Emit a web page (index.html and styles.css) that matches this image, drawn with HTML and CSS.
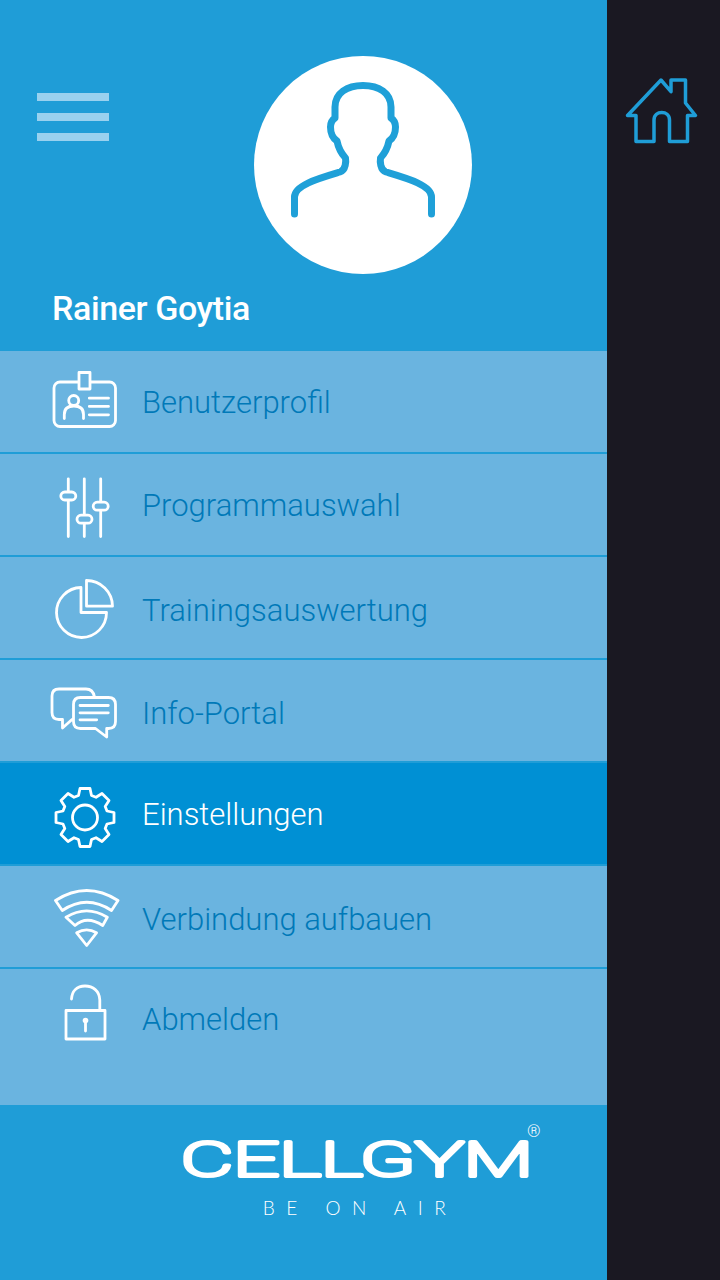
FILE: index.html
```html
<!DOCTYPE html>
<html lang="de">
<head>
<meta charset="utf-8">
<title>Cellgym</title>
<link rel="stylesheet" href="styles.css">
</head>
<body>
<div class="app">
  <aside class="drawer">
    <header class="head">
      <div class="head-top">
        <div class="burger"><span></span><span></span><span></span></div>
        <div class="avatar">
          <svg class="avatar-svg" viewBox="254 56 218 218"><path d="M294.500 214V197C294.500 185 320 178 340 172C346 170 346 161 345.500 158C340 152 338 146 337 141C332.500 138 330.500 132 330.500 127C330.500 123 332 120 335 118V107C335 93 347 85.500 363 85.500C379 85.500 391 93 391 107V118C394 120 395.500 123 395.500 127C395.500 132 393.500 138 389 141C388 146 386 152 380.500 158C380 161 380 170 386 172C406 178 431.500 185 431.500 197V214"/></svg>
        </div>
      </div>
      <div class="name">Rainer Goytia</div>
    </header>
    <nav class="menu">
      <a class="item">
        <svg class="ico" viewBox="50 365.500 72 72"><rect x="54" y="381.500" width="61.500" height="44.500" rx="6"/><rect class="solid" x="79" y="372" width="11" height="16.500"/><circle cx="73.700" cy="400" r="5"/><path d="M64.300 418V414C64.300 408 68 405.500 73.900 405.500S83.500 408 83.500 414V418M89.300 397.700H108.500M89.300 405.900H108.500M89.300 414.300H108.500"/></svg>
        <span class="label label-mid">Benutzerprofil</span>
      </a>
      <a class="item">
        <svg class="ico" viewBox="50 468.500 72 72"><path d="M68.300 478.300V536M84.300 478.300V536M100.700 478.300V536"/><rect class="solid" x="60.800" y="491.500" width="15" height="8" rx="4"/><rect class="solid" x="77" y="514.700" width="15" height="8" rx="4"/><rect class="solid" x="93.200" y="501.700" width="15" height="8" rx="4"/></svg>
        <span class="label label-mid">Programmauswahl</span>
      </a>
      <a class="item">
        <svg class="ico" viewBox="50 571.500 72 72"><path d="M81 587A25 25 0 1 0 106.500 612H81ZM86.500 580A26 26 0 0 1 112.500 605.700H86.500Z"/></svg>
        <span class="label label-low">Trainingsauswertung</span>
      </a>
      <a class="item">
        <svg class="ico" viewBox="50 674.500 72 72"><path d="M94.500 696.500C93.500 691 91 688.500 86 688.500H59C54.500 688.500 52 691 52 695.500V712C52 716.500 54.500 719 59 719H62.500V727.500L72 719"/><path d="M80.500 697H108.500C113 697 115.500 699.500 115.500 704V721C115.500 725.500 113 728 108.500 728H106.700V736.500L95.500 728H80.500C76 728 73.500 725.500 73.500 721V704C73.500 699.500 76 697 80.500 697ZM80 705H108.300M80 712.300H108.300M80 719.300H96.700"/></svg>
        <span class="label label-low">Info-Portal</span>
      </a>
      <a class="item active">
        <svg class="ico" viewBox="50 777.500 72 72"><g transform="translate(85 817)"><path d="M-6.500-22L-5-29H5L6.500-22L11-20.200L17-24L24-17L20.200-11L22-6.500L29-5V5L22 6.500L20.200 11L24 17L17 24L11 20.200L6.500 22L5 29H-5L-6.500 22L-11 20.200L-17 24L-24 17L-20.200 11L-22 6.500L-29 5V-5L-22-6.500L-20.200-11L-24-17L-17-24L-11-20.200Z"/><circle r="12.500"/></g></svg>
        <span class="label label-mid">Einstellungen</span>
      </a>
      <a class="item">
        <svg class="ico" viewBox="50 880.500 72 72"><path d="M55.500 900Q86.700 880 118 900L111.500 910Q86.700 893.500 62.300 910ZM66 916.700Q86.700 904 107.300 916.700L102.700 925Q86.700 914.500 75 925ZM76.700 932.300Q86.700 926.500 96.500 932.300L86.700 945Z"/></svg>
        <span class="label label-low">Verbindung aufbauen</span>
      </a>
      <a class="item last">
        <svg class="ico" viewBox="50 983 72 72"><rect x="66" y="1010.500" width="39" height="28.500"/><path d="M71.500 999C72 991 77 986 85 986S99.500 991 99.800 1000V1010.500M85.500 1021V1031"/><circle class="dot" cx="85.500" cy="1020.500" r="2.800"/></svg>
        <span class="label label-mid">Abmelden</span>
      </a>
    </nav>
    <footer class="foot">
      <div class="logo">
        <svg class="logo-svg" viewBox="0 0 362 60"><text class="logo-word" x="5" y="48" textLength="352" lengthAdjust="spacingAndGlyphs">CELLGYM</text><text class="logo-reg" x="351" y="9">®</text></svg>
        <div class="tag">BE ON AIR</div>
      </div>
    </footer>
  </aside>
  <div class="side">
    <svg class="home" viewBox="625 77 74 68"><path d="M661 80L671 91.700V80H685.500V103L695.500 115.500H687.500V141.500H669.500V120C669.500 110 654 110 654 120V141.500H636V115.500H627.500Z"/></svg>
  </div>
</div>
</body>
</html>
```
FILE: styles.css
```css
* { box-sizing: border-box; }
html, body { margin: 0; padding: 0; }
body { font-family: Roboto, "Liberation Sans", sans-serif; background: #1a1822; }
.app { display: flex; width: 720px; height: 1280px; overflow: hidden; }
.drawer { width: 607px; flex: none; display: flex; flex-direction: column; background: #1f9dd7; }
.head { height: 351px; flex: none; padding-top: 56px; }
.head-top { display: flex; align-items: flex-start; padding-left: 37px; }
.burger { width: 72px; display: flex; flex-direction: column; gap: 12px; margin-top: 37px; }
.burger span { display: block; height: 8px; background: #99d1ef; }
.avatar { width: 218px; height: 218px; margin-left: 145px; border-radius: 50%; background: #fff; }
.avatar-svg { display: block; width: 218px; height: 218px; fill: none; stroke: #1fa0d8; stroke-width: 7; stroke-linecap: round; stroke-linejoin: round; }
.name { margin: 14px 0 0 52px; font-size: 34px; line-height: 40px; font-weight: 500; letter-spacing: -0.4px; color: #fff; }
.menu { display: flex; flex-direction: column; flex: none; }
.item { height: 103px; display: flex; align-items: center; padding-left: 50px; background: #6ab4e0; border-bottom: 2px solid #1f9dd7; }
.item.active { background: #0090d4; border-bottom-color: #1f9dd7; }
.item.last { height: 136px; align-items: flex-start; padding-top: 14px; border-bottom: 0; }
.ico { display: block; width: 72px; height: 72px; flex: none; fill: none; stroke: #fff; stroke-width: 2.800; stroke-linecap: round; stroke-linejoin: round; }
.ico .solid { fill: #6ab4e0; }
.ico .dot { fill: #fff; stroke: none; }
.label { margin-left: 20px; font-size: 31px; line-height: 40px; font-weight: 300; color: #0079b8; }
.label-mid { position: relative; top: 1px; }
.label-low { position: relative; top: 3px; }
.last .label { margin-top: 16px; }
.active .label { color: #fff; }
.foot { flex: 1; padding: 23px 0 0 176px; }
.logo { width: 362px; display: flex; flex-direction: column; align-items: center; }
.logo-svg { display: block; width: 362px; height: 60px; overflow: visible; }
.logo-word { font-family: Roboto, sans-serif; font-weight: 100; font-size: 49px; fill: #fff; stroke: #fff; stroke-width: 4px; stroke-linejoin: round; stroke-linecap: round; }
.logo-reg { font-family: Roboto, sans-serif; font-weight: 300; font-size: 17px; fill: #fff; }
.tag { margin: 9px 0 0 6px; font-family: Lato, sans-serif; font-weight: 300; font-size: 19px; line-height: 22px; letter-spacing: 11.500px; color: #fff; white-space: nowrap; }
.side { flex: 1; padding: 77px 0 0 18px; }
.home { display: block; width: 74px; height: 68px; fill: none; stroke: #1f9dd7; stroke-width: 3.500; stroke-linejoin: round; stroke-linecap: round; }
```
